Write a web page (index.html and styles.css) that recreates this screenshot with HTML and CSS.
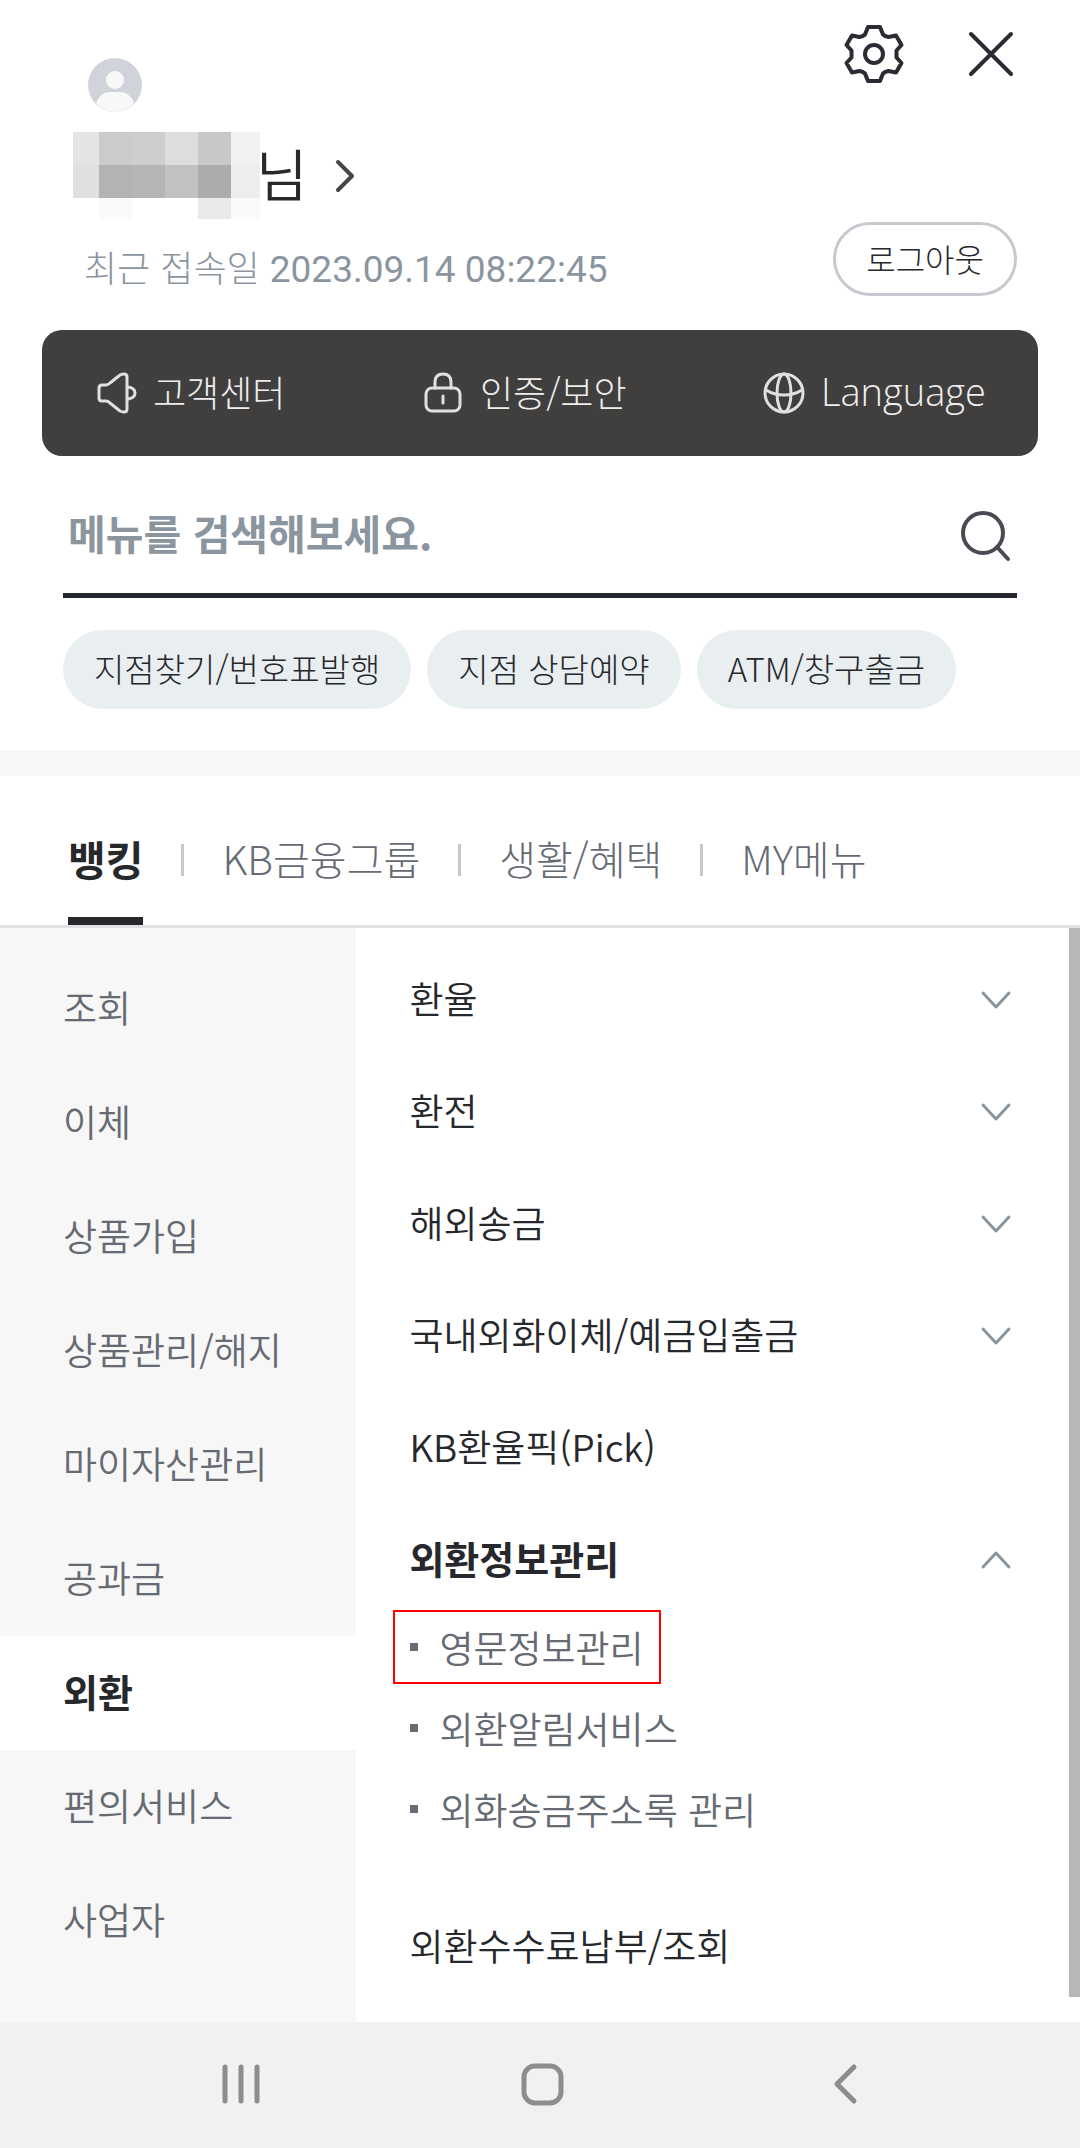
FILE: index.html
```html
<!DOCTYPE html>
<html lang="ko">
<head>
    <meta charset="UTF-8">
    <meta name="viewport" content="width=device-width, initial-scale=1.0">
    <title>전체메뉴</title>
    <link rel="stylesheet" href="styles.css">
</head>
<body>

    <header class="header">
        <div class="profile">
            <svg class="avatar" viewBox="0 0 54 54" aria-hidden="true">
                <circle cx="27" cy="27" r="27" fill="#d0d4da"/>
                <circle cx="27" cy="22" r="9" fill="#f8f8f8"/>
                <path d="M8 45C11 37 17 34 22 34h10c5 0 11 3 14 11C41 51 34 54 27 54S13 51 8 45z" fill="#f8f8f8"/>
            </svg>
            <a class="name" href="#">
                <svg class="mask" viewBox="0 0 187 87" shape-rendering="crispEdges" aria-hidden="true">
                    <rect x="0" y="0" width="26" height="33" fill="#e4e4e5"/>
                    <rect x="26" y="0" width="33" height="33" fill="#cacbca"/>
                    <rect x="59" y="0" width="33" height="33" fill="#cdcdce"/>
                    <rect x="92" y="0" width="33" height="33" fill="#dddddd"/>
                    <rect x="125" y="0" width="33" height="33" fill="#c8c8c9"/>
                    <rect x="158" y="0" width="29" height="33" fill="#f2f2f2"/>
                    <rect x="0" y="33" width="26" height="33" fill="#dfe0e0"/>
                    <rect x="26" y="33" width="33" height="33" fill="#b3b3b4"/>
                    <rect x="59" y="33" width="33" height="33" fill="#b5b5b6"/>
                    <rect x="92" y="33" width="33" height="33" fill="#c1c1c2"/>
                    <rect x="125" y="33" width="33" height="33" fill="#acacae"/>
                    <rect x="158" y="33" width="29" height="33" fill="#ededed"/>
                    <rect x="26" y="66" width="33" height="21" fill="#fafafc"/>
                    <rect x="125" y="66" width="33" height="21" fill="#e9e9ea"/>
                    <rect x="158" y="66" width="29" height="21" fill="#fafafc"/>
                </svg>
                <span>님</span>
                <svg class="arrow" viewBox="0 0 22 36" aria-hidden="true">
                    <path d="M4 4l14 14L4 32"/>
                </svg>
            </a>
            <p class="last-login">최근 접속일 <time>2023.09.14 08:22:45</time></p>
        </div>
        <div class="tools">
            <div class="tool-icons">
                <button class="icon-button" aria-label="설정">
                    <svg class="gear" viewBox="-30 -30 60 60">
                        <path d="M-6-27H6L9-19.500Q11-17.500 14.500-17L22-18.500 27.500-9 22.500-3.500V3.500L27.500 9 22 18.500 14.500 17Q11 17.500 9 19.500L6 27H-6L-9 19.500Q-11 17.500-14.500 17L-22 18.500-27.500 9-22.500 3.500V-3.500L-27.500-9-22-18.500-14.500-17Q-11-17.500-9-19.500z"/>
                        <circle r="9"/>
                    </svg>
                </button>
                <button class="icon-button" aria-label="닫기">
                    <svg class="close" viewBox="0 0 52 52">
                        <path d="M6 6l40 40M46 6L6 46"/>
                    </svg>
                </button>
            </div>
            <button class="logout">로그아웃</button>
        </div>
    </header>

    <nav class="quick">
        <a href="#">
            <svg viewBox="0 0 44 44" aria-hidden="true">
                <path d="M5 17q0-3 3-3h4q2 0 4-2l10-8q2-1 4-1 3 0 3 3v32q0 3-3 3-2 0-4-1l-10-8q-2-2-4-2H8q-3 0-3-3zM34 16q7 1 7 6t-7 6"/>
            </svg>
            고객센터
        </a>
        <a href="#">
            <svg viewBox="0 0 44 44" aria-hidden="true">
                <rect x="5" y="17" width="34" height="23" rx="6"/>
                <path d="M14 17v-6q0-8 8-8t8 8v6M22 25v7"/>
            </svg>
            인증/보안
        </a>
        <a href="#">
            <svg viewBox="0 0 44 44" aria-hidden="true">
                <circle cx="22" cy="22" r="19"/>
                <ellipse cx="22" cy="22" rx="7" ry="19"/>
                <path d="M4 19q8 5 18 5t18-5"/>
            </svg>
            <span class="latin">Language</span>
        </a>
    </nav>

    <form class="search">
        <input type="text" placeholder="메뉴를 검색해보세요." aria-label="메뉴 검색">
        <button class="icon-button" type="button" aria-label="검색">
            <svg class="magnifier" viewBox="0 0 54 54">
                <circle cx="24" cy="25" r="20"/>
                <path d="M38 39l11 12"/>
            </svg>
        </button>
    </form>

    <div class="chips">
        <a href="#">지점찾기/번호표발행</a>
        <a href="#">지점 상담예약</a>
        <a href="#">ATM/창구출금</a>
    </div>

    <nav class="tabs">
        <a class="active" href="#">뱅킹</a>
        <a href="#">KB금융그룹</a>
        <a href="#">생활/혜택</a>
        <a href="#">MY메뉴</a>
    </nav>

    <main class="menu">
        <nav class="categories">
            <a href="#">조회</a>
            <a href="#">이체</a>
            <a href="#">상품가입</a>
            <a href="#">상품관리/해지</a>
            <a href="#">마이자산관리</a>
            <a href="#">공과금</a>
            <a class="active" href="#">외환</a>
            <a href="#">편의서비스</a>
            <a href="#">사업자</a>
        </nav>

        <div class="items">
            <button class="item">환율 <svg viewBox="0 0 32 20"><path d="M3 3l13 14L29 3"/></svg></button>
            <button class="item">환전 <svg viewBox="0 0 32 20"><path d="M3 3l13 14L29 3"/></svg></button>
            <button class="item">해외송금 <svg viewBox="0 0 32 20"><path d="M3 3l13 14L29 3"/></svg></button>
            <button class="item">국내외화이체/예금입출금 <svg viewBox="0 0 32 20"><path d="M3 3l13 14L29 3"/></svg></button>
            <a class="item" href="#">KB환율픽(Pick)</a>
            <button class="item open">외환정보관리 <svg viewBox="0 0 32 20"><path d="M3 17L16 3l13 14"/></svg></button>
            <ul class="sub-items">
                <li><a class="marked" href="#">영문정보관리</a></li>
                <li><a href="#">외환알림서비스</a></li>
                <li><a href="#">외화송금주소록 관리</a></li>
            </ul>
            <a class="item" href="#">외환수수료납부/조회</a>
        </div>
    </main>

    <footer class="system-bar">
        <button class="icon-button" aria-label="최근 앱">
            <svg viewBox="0 0 44 44"><path d="M6 5v34M22 5v34M38 5v34"/></svg>
        </button>
        <button class="icon-button" aria-label="홈">
            <svg viewBox="0 0 44 44"><rect x="4" y="4" width="37" height="37" rx="11"/></svg>
        </button>
        <button class="icon-button" aria-label="뒤로">
            <svg viewBox="0 0 44 44"><path d="M33 5L16 22l17 17"/></svg>
        </button>
    </footer>

</body>
</html>
```
FILE: styles.css
```css
* {
    box-sizing: border-box;
}
body {
    margin: 0;
    min-height: 100vh;
    display: flex;
    flex-direction: column;
    background-color: #fff;
    color: #26282c;
    font-family: "Noto Sans CJK KR", sans-serif;
    font-weight: 300;
    font-size: 37px;
    line-height: 48px;
}
a {
    color: inherit;
    text-decoration: none;
}
button, input {
    font: inherit;
    color: inherit;
    background: none;
    border: none;
    padding: 0;
}
svg {
    display: block;
    flex: none;
    fill: none;
    stroke-linecap: round;
    stroke-linejoin: round;
}
.icon-button {
    display: flex;
    align-items: center;
    justify-content: center;
}

/* profile */
.header {
    display: flex;
    justify-content: space-between;
    padding: 24px 63px 34px 73px;
}
.profile {
    display: flex;
    flex-direction: column;
    padding-top: 34px;
}
.avatar {
    width: 54px;
    height: 54px;
    margin: 0 0 20px 15px;
}
.name {
    display: flex;
    align-items: center;
    font-size: 56px;
    font-weight: 350;
    line-height: 80px;
}
.name span {
    margin-left: -4px;
    padding-bottom: 7px;
}
.mask {
    width: 187px;
    height: 87px;
}
.arrow {
    width: 22px;
    height: 36px;
    margin-left: 26px;
    stroke: #46474d;
    stroke-width: 4;
}
.last-login {
    margin: 23px 0 2px 11px;
    color: #8b959f;
    font-size: 36px;
}
.last-login time {
    font-family: Roboto, sans-serif;
    font-size: 37px;
    font-weight: 400;
}
.tools {
    display: flex;
    flex-direction: column;
    align-items: flex-end;
    justify-content: space-between;
}
.tool-icons {
    display: flex;
    align-items: center;
    gap: 61px;
}
.gear {
    width: 60px;
    height: 60px;
    stroke: #2b2c33;
    stroke-width: 4;
}
.close {
    width: 52px;
    height: 52px;
    stroke: #2b2c33;
    stroke-width: 4;
}
.logout {
    height: 74px;
    padding: 0 30px 3px;
    border: 3px solid #c6cacf;
    border-radius: 37px;
    font-size: 32px;
}

/* quick links */
.quick {
    display: flex;
    justify-content: space-between;
    margin: 0 42px;
    padding: 37px 52px;
    border-radius: 20px;
    background-color: #413f3d;
    color: #eceef0;
    font-size: 36px;
    line-height: 44px;
}
.quick a {
    display: flex;
    align-items: center;
    gap: 15px;
    padding-bottom: 4px;
}
.quick svg {
    width: 44px;
    height: 44px;
    margin-top: 4px;
    stroke: #dde1e4;
    stroke-width: 3;
}
.latin {
    font-family: "Open Sans", sans-serif;
    font-size: 38px;
}

/* search */
.search {
    display: flex;
    align-items: center;
    justify-content: space-between;
    height: 142px;
    margin: 0 63px;
    padding: 20px 4px 0 5px;
    border-bottom: 5px solid #26282f;
}
.search input {
    flex: 1;
    min-width: 0;
    padding-bottom: 6px;
    font-size: 41px;
    font-weight: 700;
    outline: none;
}
.search input::placeholder {
    color: #8b959f;
    opacity: 1;
}
.magnifier {
    width: 54px;
    height: 54px;
    stroke: #484b52;
    stroke-width: 4;
}
.chips {
    display: flex;
    gap: 16px;
    padding: 32px 63px 41px;
    font-size: 33px;
}
.chips a {
    padding: 14px 31px 17px;
    border-radius: 40px;
    background-color: #e9eef1;
}

/* tabs */
.tabs {
    display: flex;
    gap: 79px;
    padding: 0 68px;
    border-top: 26px solid #f7f7f7;
    border-bottom: 3px solid #dfe1e5;
    color: #666a73;
    font-size: 40px;
}
.tabs a {
    position: relative;
    padding: 58px 0 35px;
    border-bottom: 8px solid transparent;
}
.tabs a + a::before {
    content: "";
    position: absolute;
    left: -41px;
    top: 68px;
    width: 3px;
    height: 32px;
    background-color: #c6cacf;
}
.tabs .active {
    color: #26282c;
    font-size: 41px;
    font-weight: 700;
    border-bottom-color: #26282c;
}

/* menu */
.menu {
    position: relative;
    display: flex;
    flex: 1;
    font-weight: 350;
}
/* scroll thumb */
.menu::after {
    content: "";
    position: absolute;
    top: 0;
    right: 0;
    bottom: 25px;
    width: 11px;
    background-color: #b7b7b7;
}
.categories {
    display: flex;
    flex-direction: column;
    width: 33%;
    padding: 24px 0 44px;
    background-color: #f7f7f7;
    color: #666a73;
}
.categories a {
    padding: 31px 0 35px 63px;
}
.categories .active {
    background-color: #fff;
    color: #26282c;
    font-size: 38px;
    font-weight: 700;
}
.items {
    display: flex;
    flex: 1;
    flex-direction: column;
    padding: 15px 68px 0 53px;
}
.item {
    display: flex;
    align-items: center;
    justify-content: space-between;
    padding: 31px 0 33px;
    text-align: left;
}
.item svg {
    width: 32px;
    height: 20px;
    margin-top: 4px;
    stroke: #8b959f;
    stroke-width: 3;
}
.item.open {
    padding-bottom: 25px;
    font-size: 38px;
    font-weight: 700;
}
.sub-items {
    margin: 0;
    padding: 0 0 40px;
    list-style: none;
    color: #666a73;
}
.sub-items li {
    display: flex;
    margin-left: -16px;
    padding: 3px 0 4px;
}
.sub-items a {
    display: flex;
    align-items: center;
    gap: 21px;
    padding: 11px 15px;
    border: 2px solid transparent;
}
.sub-items a::before {
    content: "";
    width: 8px;
    height: 8px;
    background-color: #666a73;
}
.sub-items .marked {
    border-color: #f00;
}

/* system navigation */
.system-bar {
    display: flex;
    justify-content: center;
    padding: 40px 0 42px 4px;
    background-color: #f1f1f1;
}
.system-bar button {
    width: 28%;
}
.system-bar svg {
    width: 44px;
    height: 44px;
    stroke: #8d8d8d;
    stroke-width: 5;
}
```
